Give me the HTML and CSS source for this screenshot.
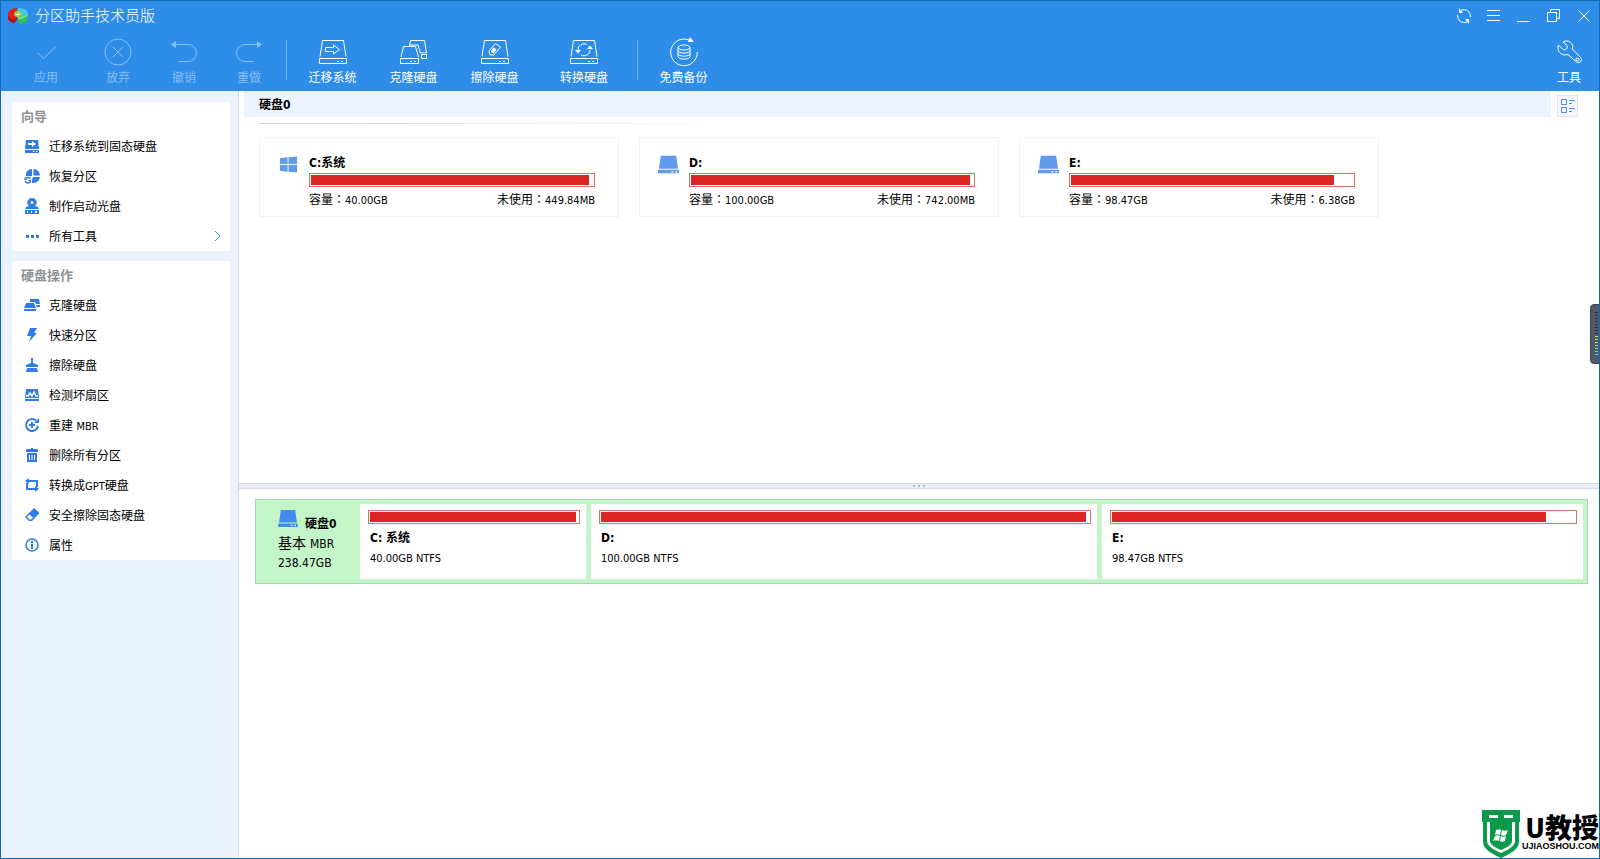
FILE: index.html
```html
<!DOCTYPE html>
<html lang="zh-CN">
<head>
<meta charset="utf-8">
<title>分区助手技术员版</title>
<link rel="stylesheet" href="styles.css">
</head>
<body>
<svg class="sprite" aria-hidden="true">
  <symbol id="drive-line" viewBox="0 0 28 28"><path d="M3.500 2.500h21l2.500 16M3.500 2.500l-2.500 16M.5 20.500h27v5H.5zM18 23.500h2M22 23.500h2"/></symbol>
  <symbol id="drive-solid" viewBox="0 0 22 19"><path d="M3 0h16l2 14H1z"/><path d="M0 15h22v4H0zm14 1.500v1.500h2v-1.500zm4 0v1.500h2v-1.500z" fill-rule="evenodd"/></symbol>
</svg>
<div class="window">
  <header class="header">
    <div class="titlebar">
      <svg class="app-logo" width="20" height="16" viewBox="0 0 20 16">
        <path d="M9 7V0C4 0 0 3 0 6v4c0 2 2 4 6 5l3-4z" fill="#e02020"/>
        <path d="M0 8c1 2 3 3 6 4l3-2v2l-3 3c-4-1-6-3-6-5z" fill="#a81414"/>
        <path d="M10 0c6 0 10 2 10 6v2h-9l-1-2z" fill="#45c8f0"/>
        <path d="M10 9l10-2v3c0 3-4 6-9 6z" fill="#2fbf58"/><path d="M10 9l10-2v1l-9 4z" fill="#6ee08a"/>
        <ellipse cx="10" cy="6" rx="4" ry="3" fill="#9fd046"/><path d="M8 6l2 1 2-2" fill="none" stroke="#fff"/>
      </svg>
      <h1 class="title">分区助手技术员版</h1>
      <div class="window-controls">
        <button class="control" aria-label="刷新"><svg width="16" height="16" viewBox="0 0 16 16"><path d="M5 2.500C10 0 14.500 3.500 14.500 9M11 14C6 16 1.500 12.500 1.500 7"/><path d="M3 0v5h4zM13 16v-5H9z" fill="#fff" stroke="none"/></svg></button>
        <button class="control" aria-label="菜单"><svg width="14" height="14" viewBox="0 0 14 14"><path d="M0 1.500h13M0 6.500h13M0 11.500h13"/></svg></button>
        <button class="control" aria-label="最小化"><svg width="14" height="14" viewBox="0 0 14 14"><path d="M0 12.500h13"/></svg></button>
        <button class="control" aria-label="还原"><svg width="14" height="14" viewBox="0 0 14 14"><path d="M.5 3.500h9v9h-9zM3.500 3V.5h9v9H10"/></svg></button>
        <button class="control" aria-label="关闭"><svg width="14" height="14" viewBox="0 0 14 14"><path d="M1.500 1.500l11 11M12.500 1.500l-11 11"/></svg></button>
      </div>
    </div>
    <nav class="toolbar">
      <button class="tool tool-apply" disabled><svg width="28" height="28" viewBox="0 0 28 28"><path d="M5.500 14.500l6 6L24 8.500"/></svg><span>应用</span></button>
      <button class="tool tool-discard" disabled><svg width="28" height="28" viewBox="0 0 28 28"><circle cx="14" cy="14" r="13"/><path d="M9 9l10 10M19 9L9 19"/></svg><span>放弃</span></button>
      <button class="tool tool-undo" disabled><svg width="28" height="28" viewBox="0 0 28 28"><path d="M4 6.500h14a8.500 8.500 0 0 1 0 17H9"/><path d="M1 6.500L6 3v7z" fill="currentColor" stroke="none"/></svg><span>撤销</span></button>
      <button class="tool tool-redo" disabled><svg width="28" height="28" viewBox="0 0 28 28"><path d="M24 6.500H10a8.500 8.500 0 0 0 0 17h9"/><path d="M27 6.500L22 3v7z" fill="currentColor" stroke="none"/></svg><span>重做</span></button>
      <i class="divider"></i>
      <button class="tool tool-disk"><svg width="28" height="28" viewBox="0 0 28 28"><use href="#drive-line"/><path d="M6.500 9.500h8V7l6 4.500-6 4.500v-2.500h-8z"/></svg><span>迁移系统</span></button>
      <button class="tool tool-disk"><svg width="28" height="28" viewBox="0 0 28 28"><path d="M1 19L3.500 8.500h12l3 10.500M.5 20.500h18v5H.5zM10 23.500h2M14 23.500h2M9.500 8l1-5.500h14l2 12.500h-6l-2.500-8H10M21.500 16.500h5v4h-5z"/></svg><span>克隆硬盘</span></button>
      <button class="tool tool-disk"><svg width="28" height="28" viewBox="0 0 28 28"><use href="#drive-line"/><path d="M8 13l6.500-7.500 5 3.500-6.500 8H9z"/><path d="M10 13l2.500-3.500 3 2-2.500 3.500h-2z" fill="#fff" stroke="none"/></svg><span>擦除硬盘</span></button>
      <button class="tool tool-convert"><svg width="28" height="28" viewBox="0 0 28 28"><use href="#drive-line"/><path d="M8 12a6 6 0 0 1 9-5.500M20 12a6 6 0 0 1-9 5"/><path d="M5 12h6l-3 3.500zM17 11h6l-3-3.500z" fill="#fff" stroke="none"/></svg><span>转换硬盘</span></button>
      <i class="divider"></i>
      <button class="tool tool-disk"><svg width="28" height="28" viewBox="0 0 28 28"><path d="M20 2.500A13.300 13.300 0 1 0 27.300 14"/><path d="M18 4h6l-4-5z" fill="#fff" stroke="none"/><ellipse cx="14" cy="9.500" rx="6" ry="2.500"/><path d="M8 9.500v9c0 3.500 12 3.500 12 0v-9M8 12.500c0 3.500 12 3.500 12 0M8 15.500c0 3.500 12 3.500 12 0"/></svg><span>免费备份</span></button>
      <button class="tool tool-menu"><svg width="28" height="28" viewBox="0 0 28 28"><path d="M8 4C13 1 19 5 17.500 11l8 8.500c2.500 3-1 7-4 4.500L13 16.500c-6 2-12-3-9.500-9.500L8 11.500c3 1 5-1 4-4z"/><circle cx="22.500" cy="21.500" r="1.500"/></svg><span>工具</span></button>
    </nav>
  </header>

  <div class="body">
    <aside class="sidebar">
      <section class="panel">
        <h2 class="panel-title">向导</h2>
        <button class="item"><svg viewBox="0 0 16 16"><path fill-rule="evenodd" d="M2 2h12l1 9H1zm2 3v2h4v2l4-3-4-3v2zM1 12h14v3H1zm8 1v1h1.500v-1zm3 0v1h1.500v-1z"/></svg><span>迁移系统到固态硬盘</span></button>
        <button class="item"><svg viewBox="0 0 16 16"><path d="M8 1v7H2a6 6 0 0 1 6-7zM9.500 1A6.500 6.500 0 0 1 16 7.500H9.500zM9 9h7a7 7 0 0 1-8 6v-3z"/><path d="M6.500 11a3 3 0 0 0-5-.5M1 13a3 3 0 0 0 5 1" fill="none" stroke="currentColor" stroke-width="1.500"/><path d="M0 12h3L1 9zM7 12H4l3 3z"/></svg><span>恢复分区</span></button>
        <button class="item"><svg viewBox="0 0 16 16"><path fill-rule="evenodd" d="M8 0a4.500 4.500 0 0 1 3 8l3 1 1 2H1l1-2 3-1a4.500 4.500 0 0 1 3-8zm0 3a1.500 1.500 0 1 0 0 3 1.500 1.500 0 0 0 0-3zM1 12h14v4H1zm2 1v2h1v-2zm4 0v2h1v-2zm4 0v2h2v-2z"/></svg><span>制作启动光盘</span></button>
        <button class="item"><svg viewBox="0 0 16 16"><path d="M2 7h3v3H2zM7 7h3v3H7zM12 7h3v3h-3z"/></svg><span>所有工具</span><svg class="chevron" viewBox="0 0 16 16"><path d="M6 3l5 5-5 5"/></svg></button>
      </section>
      <section class="panel">
        <h2 class="panel-title">硬盘操作</h2>
        <button class="item"><svg viewBox="0 0 16 16"><path d="M6 2h9l1 5h-4l-1-2H6zM12 8h4v2h-3zM2 6h8l2 5H0zM0 12h12v2H0z"/></svg><span>克隆硬盘</span></button>
        <button class="item"><svg viewBox="0 0 16 16"><path d="M6 1h7l-3 5h3L5 15l2-6H3z"/></svg><span>快速分区</span></button>
        <button class="item"><svg viewBox="0 0 16 16"><path d="M7 1h2v5l5 2v2H2V8l5-2zM3 11h10l1 4H2z"/></svg><span>擦除硬盘</span></button>
        <button class="item"><svg viewBox="0 0 16 16"><path d="M2 2h12l1 9H1zM1 12h14v2H1z"/><path d="M2 9h2l2-3 2 3 2-4 2 4h2" fill="none" stroke="#fff" stroke-width="1.500"/></svg><span>检测坏扇区</span></button>
        <button class="item"><svg viewBox="0 0 16 16"><path d="M12 3.500A6 6 0 1 0 14 9M5 8h6M8 5v6" fill="none" stroke="currentColor" stroke-width="2"/><path d="M10 6h5V1z"/></svg><span>重建 <span class="latin">MBR</span></span></button>
        <button class="item"><svg viewBox="0 0 16 16"><path fill-rule="evenodd" d="M7 1h2v1h5v3H2V2h5zM3 6h10v9H3zm2 2v5h1V8zm2.500 0v5h1V8zM10 8v5h1V8z"/></svg><span>删除所有分区</span></button>
        <button class="item"><svg viewBox="0 0 16 16"><path d="M4 4h9v6M12 12H3V6" fill="none" stroke="currentColor" stroke-width="2"/><path d="M5 1v6L1 4zM11 9v6l4-3z"/></svg><span>转换成<span class="latin">GPT</span>硬盘</span></button>
        <button class="item"><svg viewBox="0 0 16 16"><path fill-rule="evenodd" d="M10 1l5.500 5L8 14H5L1 10zM5.500 7.500L3 10l2.500 2.500H7L9 10.500z"/></svg><span>安全擦除固态硬盘</span></button>
        <button class="item"><svg viewBox="0 0 16 16"><circle cx="8" cy="8" r="6" fill="none" stroke="currentColor" stroke-width="1.500"/><path d="M7 4h2v2H7zM7 7h2v5H7z"/></svg><span>属性</span></button>
      </section>
    </aside>

    <main class="main">
      <section class="volumes">
        <div class="volumes-head">
          <h2 class="disk-heading">硬盘0</h2>
          <button class="view-toggle" aria-label="切换视图"><svg width="14" height="14" viewBox="0 0 14 14"><path d="M.5.5h5v5h-5zM.5 8.500h5v5h-5zM8 1.500h6M8 4.500h3M8 9.500h6M8 12.500h3"/></svg></button>
        </div>
        <div class="rule"></div>
        <div class="cards">
          <article class="card">
            <svg class="card-icon" viewBox="0 0 22 19"><path d="M2 3l8-1v7H2zM11 2l9-1v8h-9zM2 10h8v7l-8-1zM11 10h9v8l-9-1z"/></svg>
            <div class="card-body">
              <h3 class="name">C:系统</h3>
              <div class="bar"><div class="fill" style="width:98.6%"></div></div>
              <p class="stats"><span>容量<span class="colon" lang="zh-TW">：</span><span class="latin">40.00GB</span></span><span>未使用<span class="colon" lang="zh-TW">：</span><span class="latin">449.84MB</span></span></p>
            </div>
          </article>
          <article class="card">
            <svg class="card-icon" viewBox="0 0 22 19"><use href="#drive-solid"/></svg>
            <div class="card-body">
              <h3 class="name">D:</h3>
              <div class="bar"><div class="fill" style="width:98.9%"></div></div>
              <p class="stats"><span>容量<span class="colon" lang="zh-TW">：</span><span class="latin">100.00GB</span></span><span>未使用<span class="colon" lang="zh-TW">：</span><span class="latin">742.00MB</span></span></p>
            </div>
          </article>
          <article class="card">
            <svg class="card-icon" viewBox="0 0 22 19"><use href="#drive-solid"/></svg>
            <div class="card-body">
              <h3 class="name">E:</h3>
              <div class="bar"><div class="fill" style="width:93.3%"></div></div>
              <p class="stats"><span>容量<span class="colon" lang="zh-TW">：</span><span class="latin">98.47GB</span></span><span>未使用<span class="colon" lang="zh-TW">：</span><span class="latin">6.38GB</span></span></p>
            </div>
          </article>
        </div>
      </section>
      <div class="splitter"><i></i><i></i><i></i></div>
      <section class="map">
        <div class="disk">
          <div class="disk-info">
            <div class="disk-name"><svg width="20" height="17" viewBox="0 0 22 19"><use href="#drive-solid"/></svg><h3 class="name">硬盘0</h3></div>
            <p class="disk-type">基本 <span class="disk-scheme">MBR</span></p>
            <p class="disk-size">238.47GB</p>
          </div>
          <div class="parts">
            <article class="part" style="flex-grow:212">
              <div class="bar"><div class="fill" style="width:99%"></div></div>
              <h3 class="name">C: 系统</h3><p class="fs">40.00GB NTFS</p>
            </article>
            <article class="part" style="flex-grow:492">
              <div class="bar"><div class="fill" style="width:99.4%"></div></div>
              <h3 class="name">D:</h3><p class="fs">100.00GB NTFS</p>
            </article>
            <article class="part" style="flex-grow:467">
              <div class="bar"><div class="fill" style="width:93.7%"></div></div>
              <h3 class="name">E:</h3><p class="fs">98.47GB NTFS</p>
            </article>
          </div>
        </div>
      </section>
    </main>
  </div>

  <div class="meter"><div class="meter-scale"></div></div>
  <div class="brand">
    <svg width="38" height="48" viewBox="0 0 38 48">
      <path d="M0 0h38v12H0z" fill="#0b9a4c"/><path d="M7 5h9v3H7zM22 5h9v3h-9z" fill="#fff"/>
      <path d="M1 12h36v20c0 7-9 12-18 16C10 44 1 39 1 32z" fill="#0b9a4c"/>
      <path d="M5 12h28v19c0 5-7 9-14 12C12 40 5 36 5 31z" fill="#fff"/>
      <path d="M8 12h22v19c0 4-6 7-11 9-5-2-11-5-11-9z" fill="#0b9a4c"/>
      <path d="M14 20c2-1 4-1 5 0l-1 5c-2-1-4-1-5 0zM20 20c2 1 4 1 6 0l-2 5c-2 1-3 1-5 0zM13 26c2-1 3-1 5 0l-1 5c-2-1-4-1-6 0zM19 26c2 1 3 1 5 0l-1 5c-2 1-4 1-5 0z" fill="#fff"/>
    </svg>
    <div class="brand-text"><span class="brand-name">U教授</span><span class="brand-url">UJIAOSHOU.COM</span></div>
  </div>
</div>
</body>
</html>
```
FILE: styles.css
```css
* { box-sizing: border-box; margin: 0; padding: 0; }
body {
  font-family: "DejaVu Sans Condensed", "Noto Sans", "Noto Sans CJK SC", sans-serif;
  font-size: 12px;
  line-height: 16px;
  color: #000;
}
button { font: inherit; color: inherit; background: none; border: 0; }
.sprite { position: absolute; width: 0; height: 0; }
.window {
  position: relative;
  display: flex;
  flex-direction: column;
  height: 100vh;
  overflow: hidden;
  border: 1px solid #0f69b2;
  background: #fff;
}
.header { background: #2e8de8; color: #fff; }
.titlebar { display: flex; align-items: center; height: 29px; padding-left: 7px; gap: 7px; }
.title { flex: 1; font-size: 15px; font-weight: 300; line-height: 20px; }
.window-controls { display: flex; }
.control { display: flex; align-items: center; justify-content: center; width: 30px; height: 28px; }
.control svg, .tool svg { fill: none; stroke: currentColor; overflow: visible; }
.toolbar { display: flex; height: 61px; padding-left: 7px; }
.tool { display: flex; flex-direction: column; align-items: center; gap: 4px; padding-top: 8px; white-space: nowrap; }
.tool:disabled { color: #88bdf1; }
.tool-apply { width: 76px; }
.tool-discard { width: 68px; }
.tool-undo { width: 64px; }
.tool-redo { width: 66px; }
.tool-disk { width: 81px; }
.tool-convert { width: 98px; }
.tool-menu { width: 60px; margin-left: auto; }
.divider { width: 1px; height: 40px; margin: 10px 5px 10px 4px; background: #6cb0f0; }

.body { flex: 1; display: flex; min-height: 0; }
.sidebar {
  width: 238px;
  flex: none;
  display: flex;
  flex-direction: column;
  gap: 10px;
  padding: 11px 8px 11px 11px;
  background: #eaf2fe;
  border-right: 1px solid #d2dae8;
}
.panel { background: #fff; }
.panel-title { padding: 5px 9px 4px; font-size: 13px; line-height: 20px; color: #8f9196; }
.item { display: flex; align-items: center; gap: 9px; width: 100%; height: 30px; padding: 0 5px 0 12px; text-align: left; white-space: nowrap; }
.item > span { padding-top: 2px; }
.item svg { width: 16px; height: 16px; flex: none; color: #2f7de4; fill: currentColor; }
.item .chevron { margin-left: auto; fill: none; stroke: #3894e6; stroke-width: 1px; }
.latin { font-size: 11px; }
.colon { font-family: "Noto Sans CJK TC", sans-serif; line-height: 1; }

.main { flex: 1; display: flex; flex-direction: column; min-width: 0; }
.volumes { flex: 392 0 0; min-height: 0; }
.volumes-head { display: flex; gap: 6px; padding: 0 21px 0 5px; }
.disk-heading { flex: 1; height: 26px; padding-left: 15px; font-size: 12px; line-height: 28px; background: #edf4ff; }
.view-toggle { display: flex; align-items: center; justify-content: center; width: 21px; height: 22px; margin-top: 4px; background: #f4f6fb; border: 1px solid #e2e5ec; }
.view-toggle svg { flex: none; fill: none; stroke: #4c8ee8; }
.rule { width: 480px; height: 1px; margin: 6px 0 13px 20px; background: linear-gradient(90deg, #cfd4e2, #fff); }
.cards { display: flex; flex-wrap: wrap; gap: 20px; padding: 0 20px; }
.card { display: flex; gap: 10px; width: 360px; height: 80px; padding: 17px 23px 0 18px; border: 1px solid #f2f2f5; }
.card-icon { width: 21px; height: 19px; flex: none; fill: #5f9aec; }
.card-body { flex: 1; }
.name { font-size: 12px; line-height: 16px; }
.bar { height: 14px; padding: 1px; border: 1px solid #dc7462; background: #fff; }
.fill { height: 10px; background: #dc2626; }
.card .bar { margin-top: 2px; }
.stats { display: flex; justify-content: space-between; margin-top: 5px; }
.splitter { display: flex; align-items: center; justify-content: center; gap: 3px; height: 6px; background: #e9eff7; border: solid #d2dbe5; border-width: 1px 0; }
.splitter i { width: 2px; height: 2px; background: #a9b8c9; }
.map { flex: 359 0 0; min-height: 0; padding: 10px 11px 0 16px; }
.disk { display: flex; height: 85px; padding: 4px; background: #c3f5c9; border: 1px solid #a3dcab; }
.disk-info { width: 100px; flex: none; padding: 6px 0 0 18px; }
.disk-name { display: flex; align-items: flex-start; gap: 7px; height: 23px; fill: #438bec; }
.disk-name .name { padding-top: 6px; }
.disk-type { font-size: 14px; line-height: 20px; }
.disk-scheme, .disk-size { font-size: 12px; }
.disk-size { line-height: 18px; }
.parts { flex: 1; display: flex; gap: 5px; }
.part { flex: 1 1 0; min-width: 0; padding: 6px 6px 0 8px; background: #fff; }
.part .name { margin: 6px 0 5px 2px; }
.fs { padding-left: 2px; font-size: 11px; }

.meter { position: absolute; right: -1px; top: 303px; width: 10px; height: 60px; padding: 7px 1px 7px 4px; background: #515868; border: 1px solid #3f4450; border-radius: 4px 0 0 4px; }
.meter-scale { height: 45px; background: repeating-linear-gradient(transparent 0 1px, #515868 1px 3px), linear-gradient(#30333c 48%, #e6e04a 49%, #8be07c 75%, #4ee0d8); }
.brand { position: absolute; right: 0; bottom: 0; display: flex; gap: 2px; }
.brand-text { display: flex; flex-direction: column; align-items: flex-end; padding-top: 6px; white-space: nowrap; }
.brand-name { font-size: 27px; font-weight: 900; line-height: 26px; }
.brand-url { font: bold 9px/9px "Liberation Sans", sans-serif; }
```
